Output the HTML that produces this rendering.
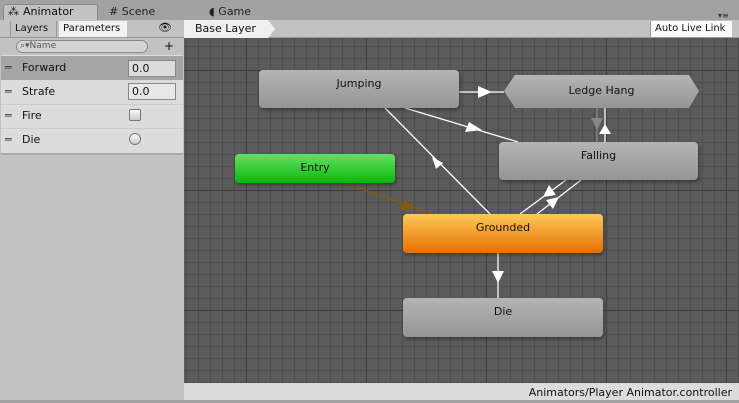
<!DOCTYPE html>
<html><head><style>
*{margin:0;padding:0;box-sizing:border-box}
body{width:739px;height:403px;background:#a2a2a2;font-family:"DejaVu Sans","Liberation Sans",sans-serif;font-size:11px;color:#111;position:relative;overflow:hidden}
.a{position:absolute}
</style></head><body>
<div class="a" style="left:0;top:0;width:739px;height:20px;background:#a2a2a2"></div>
<div class="a" style="left:3px;top:4px;width:95px;height:17px;background:#c2c2c2;border:1px solid #888;border-bottom:none;border-radius:3px 3px 0 0"></div>
<div class="a" style="left:8px;top:5px;font-size:11px">⁂</div>
<div class="a" style="left:23px;top:5px;font-size:11px">Animator</div>
<div class="a" style="left:109px;top:5px;font-size:11px;color:#222"># Scene</div>
<div class="a" style="left:209px;top:5px;font-size:11px;color:#222">◖ Game</div>
<div class="a" style="left:718px;top:11px;font-size:8px;color:#333">▾≡</div>
<div class="a" style="left:0;top:20px;width:739px;height:18px;background:#c2c2c2;border-bottom:1px solid #999"></div>
<div class="a" style="left:10px;top:21px;width:47px;height:16px;border-left:1px solid #999;border-right:1px solid #999;padding:2px 0 0 4px;font-size:10px">Layers</div>
<div class="a" style="left:59px;top:21px;width:68px;height:16px;background:#f2f2f2;padding:2px 0 0 4px;font-size:10px">Parameters</div>
<div class="a" style="left:158px;top:21px;font-size:11px">👁</div>
<div class="a" style="left:184px;top:20px;width:91px;height:18px;background:#f0f0f0;clip-path:polygon(0 0,84px 0,91px 9px,84px 18px,0 18px);padding:2px 0 0 11px;font-size:11px">Base Layer</div>
<div class="a" style="left:650px;top:21px;width:82px;height:16px;background:#fafafa;border-left:1px solid #999;padding:2px 0 0 4px;font-size:10px">Auto Live Link</div>
<div class="a" style="left:0;top:38px;width:184px;height:365px;background:#c2c2c2"></div>
<div class="a" style="left:16px;top:40px;width:132px;height:13px;border:1px solid #888;border-radius:7px;background:#d5d5d5;font-size:9px;color:#555;padding:0 0 0 3px">⌕▾Name</div>
<div class="a" style="left:164px;top:39px;font-size:12px">+</div>
<div class="a" style="left:1px;top:55px;width:182px;height:100px;background:#dcdcdc;border-bottom:2px solid #aaa"></div>
<div class="a" style="left:1px;top:56px;width:182px;height:24px;background:#a5a5a5"></div>
<div class="a" style="left:5px;top:61px;font-size:11px;color:#444">═</div><div class="a" style="left:22px;top:61px;font-size:11px">Forward</div>
<div class="a" style="left:128px;top:60px;width:48px;height:17px;border:1px solid #888;background:#dcdcdc;padding:1px 0 0 3px;font-size:11px">0.0</div>
<div class="a" style="left:5px;top:85px;font-size:11px;color:#444">═</div><div class="a" style="left:22px;top:85px;font-size:11px">Strafe</div>
<div class="a" style="left:128px;top:83px;width:48px;height:17px;border:1px solid #888;background:#e8e8e8;padding:1px 0 0 3px;font-size:11px">0.0</div>
<div class="a" style="left:1px;top:104px;width:182px;height:1px;background:#ccc"></div>
<div class="a" style="left:5px;top:109px;font-size:11px;color:#444">═</div><div class="a" style="left:22px;top:109px;font-size:11px">Fire</div>
<div class="a" style="left:129px;top:109px;width:12px;height:12px;border:1px solid #777;border-radius:2px;background:linear-gradient(#fafafa,#ccc)"></div>
<div class="a" style="left:1px;top:128px;width:182px;height:1px;background:#ccc"></div>
<div class="a" style="left:5px;top:133px;font-size:11px;color:#444">═</div><div class="a" style="left:22px;top:133px;font-size:11px">Die</div>
<div class="a" style="left:129px;top:133px;width:12px;height:12px;border:1px solid #777;border-radius:50%;background:linear-gradient(#fafafa,#ccc)"></div>
<div class="a" style="left:184px;top:38px;width:555px;height:345px;background-color:#5a5a5a;
background-image:linear-gradient(90deg,#3e3e3e 1px,transparent 1px),linear-gradient(#3e3e3e 1px,transparent 1px),linear-gradient(90deg,#4d4d4d 1px,transparent 1px),linear-gradient(#4d4d4d 1px,transparent 1px);
background-size:120px 120px,120px 120px,12px 12px,12px 12px;background-position:62px 32px,62px 32px,2px 8px,2px 8px"></div>
<svg class="a" style="left:0;top:0" width="739" height="403">
<g stroke="#fff" stroke-width="1.3">
<line x1="459" y1="92" x2="504" y2="92"/>
<line x1="405" y1="108" x2="518" y2="142"/>
<line x1="490" y1="214" x2="385" y2="108"/>
<line x1="520" y1="214" x2="566" y2="180"/>
<line x1="537" y1="214" x2="581" y2="180"/>
<line x1="605" y1="108" x2="605" y2="142"/>
<line x1="498" y1="253" x2="498" y2="298"/>
</g>
<line x1="597" y1="108" x2="597" y2="142" stroke="#888" stroke-width="1.3"/>
<line x1="345" y1="183" x2="433" y2="214" stroke="#8a5a00" stroke-width="1.3"/>
<g fill="#fff">
<polygon points="492,92 478,86 478,98"/>
<polygon points="482,130 469,122 465,132" />
<polygon points="432,157 443,163 436,169"/>
<polygon points="543,197 556,195 549,185"/>
<polygon points="559,197 553,209 546,200"/>
<polygon points="605,124 599,134 611,134"/>
<polygon points="498,283 492,271 504,271"/>
</g>
<polygon points="597,130 591,118 603,118" fill="#888"/>
<polygon points="414,208 404,200 401,210" fill="#8a5a00"/>
<defs>
<linearGradient id="g" x1="0" y1="0" x2="0" y2="1"><stop offset="0" stop-color="#b4b4b4"/><stop offset="1" stop-color="#959595"/></linearGradient>
</defs>
<polygon points="515,75 689,75 699,91 689,108 515,108 504,91" fill="url(#g)"/>
</svg>
<style>.n{position:absolute;border-radius:4px;background:linear-gradient(#b4b4b4,#959595);text-align:center;font-size:11px;box-shadow:1px 2px 3px rgba(0,0,0,.35)}</style>
<div class="n" style="left:259px;top:70px;width:200px;height:38px;padding-top:7px">Jumping</div>
<div class="a" style="left:504px;top:84px;width:195px;text-align:center;font-size:11px">Ledge Hang</div>
<div class="n" style="left:499px;top:142px;width:199px;height:38px;padding-top:7px">Falling</div>
<div class="n" style="left:235px;top:154px;width:160px;height:29px;padding-top:7px;background:linear-gradient(#64e064,#0ab70a)">Entry</div>
<div class="n" style="left:403px;top:214px;width:200px;height:39px;padding-top:7px;background:linear-gradient(#ffc85a,#e56f00)">Grounded</div>
<div class="n" style="left:403px;top:298px;width:200px;height:39px;padding-top:7px">Die</div>
<div class="a" style="left:184px;top:383px;width:555px;height:17px;background:#dcdcdc;text-align:right;padding:3px 7px 0 0;font-size:11px">Animators/Player Animator.controller</div>
<div class="a" style="left:0;top:400px;width:739px;height:3px;background:#a2a2a2"></div>
</body></html>
